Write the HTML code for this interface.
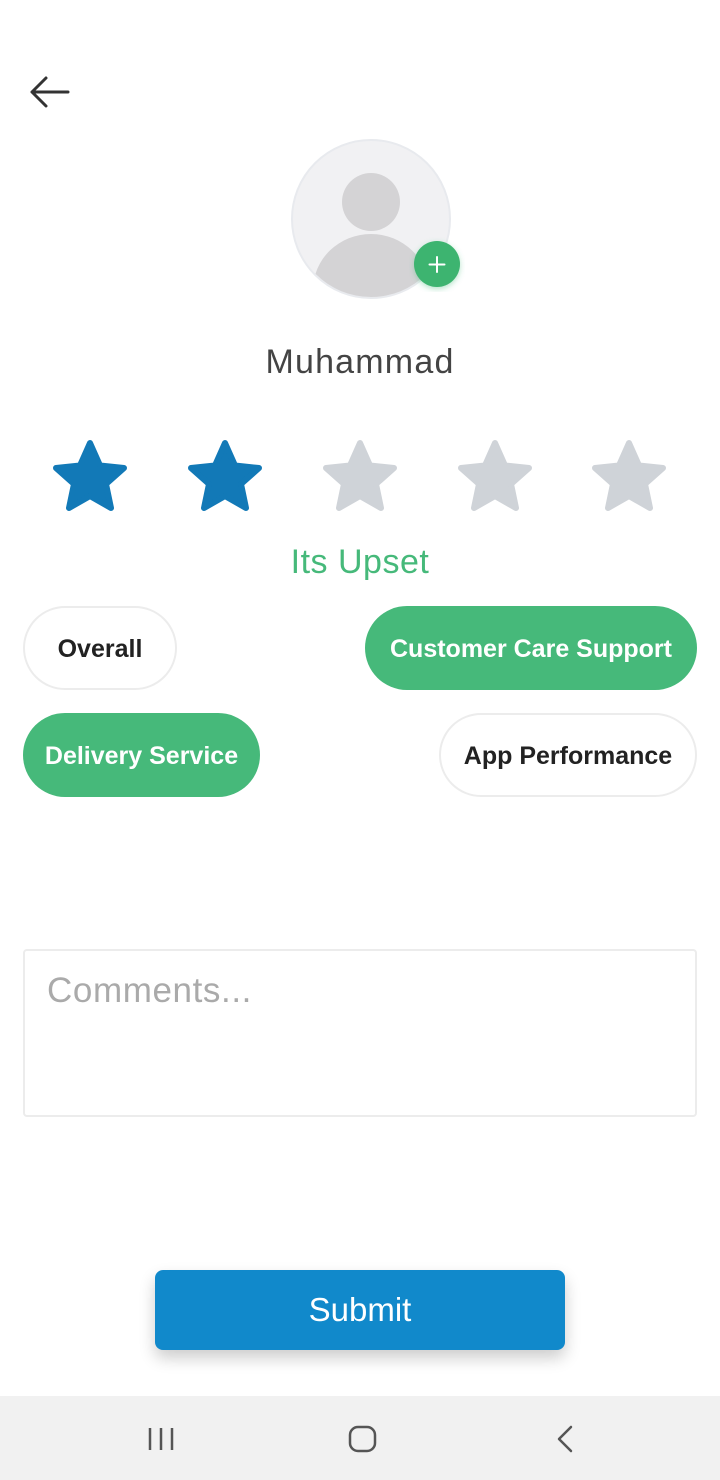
<!DOCTYPE html>
<html><head><meta charset="utf-8"><style>
*{margin:0;padding:0;box-sizing:border-box}
body{width:720px;height:1480px;background:#fff;position:relative;overflow:hidden;font-family:"Liberation Sans",sans-serif}
.abs{position:absolute}
.chip{position:absolute;height:84px;border-radius:42px;font-size:25px;font-weight:bold;display:flex;align-items:center;justify-content:center;padding-top:3px}
.w{border:2px solid #ececec;color:#222;background:#fff}
.g{background:#46b97a;color:#fff}
</style></head><body>
<svg class="abs" style="left:28px;top:74px" width="44" height="36" viewBox="0 0 44 36"><path d="M40 18H4M18 4L4 18l14 14" fill="none" stroke="#333" stroke-width="3" stroke-linecap="round" stroke-linejoin="round"/></svg>
<svg class="abs" style="left:280px;top:130px" width="200" height="180" viewBox="280 130 200 180">
<defs><clipPath id="c"><circle cx="371" cy="219" r="78"/></clipPath><filter id="s"><feDropShadow dx="0" dy="2" stdDeviation="3" flood-color="#46b97a" flood-opacity=".4"/></filter></defs>
<circle cx="371" cy="219" r="79" fill="#f1f1f3" stroke="#e8eaee" stroke-width="2"/>
<g clip-path="url(#c)"><circle cx="371" cy="202" r="29" fill="#d4d3d5"/><ellipse cx="371" cy="290" rx="58" ry="56" fill="#d4d3d5"/></g>
<circle cx="437" cy="264" r="23" fill="#3db46f" filter="url(#s)"/>
<path d="M437 257v15M429.5 264.5h15" stroke="#fff" stroke-width="2" stroke-linecap="round"/>
</svg>
<div class="abs" style="left:0;width:720px;top:343px;text-align:center;font-size:34px;color:#444;letter-spacing:1.2px">Muhammad</div>
<svg class="abs" style="left:0;top:430px" width="720" height="90" viewBox="0 430 720 90">
<defs><path id="st" d="M0,-36 L10,-13.5 L34,-11 L16,5 L21,29 L0,17 L-21,29 L-16,5 L-34,-11 L-10,-13.5Z" stroke-linejoin="round" stroke-width="6"/></defs>
<use href="#st" x="90" y="479" fill="#1279b7" stroke="#1279b7"/>
<use href="#st" x="225" y="479" fill="#1279b7" stroke="#1279b7"/>
<use href="#st" x="360" y="479" fill="#cfd3d8" stroke="#cfd3d8"/>
<use href="#st" x="495" y="479" fill="#cfd3d8" stroke="#cfd3d8"/>
<use href="#st" x="629" y="479" fill="#cfd3d8" stroke="#cfd3d8"/>
</svg>
<div class="abs" style="left:0;width:720px;top:543px;text-align:center;font-size:34px;color:#46b97a;letter-spacing:0.5px">Its Upset</div>
<div class="chip w" style="left:23px;top:606px;width:154px">Overall</div>
<div class="chip g" style="left:365px;top:606px;width:332px">Customer Care Support</div>
<div class="chip g" style="left:23px;top:713px;width:237px">Delivery Service</div>
<div class="chip w" style="left:439px;top:713px;width:258px">App Performance</div>
<div class="abs" style="left:23px;top:949px;width:674px;height:168px;border:2px solid #ececec;border-radius:4px;padding:20px 22px;font-size:35px;color:#aaa;letter-spacing:0.6px">Comments...</div>
<div class="abs" style="left:155px;top:1270px;width:410px;height:80px;background:#1189cb;border-radius:8px;color:#fff;font-size:33px;display:flex;align-items:center;justify-content:center;box-shadow:0 8px 16px rgba(0,0,0,.2)">Submit</div>
<div class="abs" style="left:0;top:1396px;width:720px;height:84px;background:#f1f1f1"></div>
<svg class="abs" style="left:0;top:1396px" width="720" height="84" viewBox="0 0 720 84">
<path d="M150 32v22M161 32v22M172 32v22" stroke="#555" stroke-width="2.5"/>
<rect x="350" y="31" width="25" height="24" rx="8" fill="none" stroke="#555" stroke-width="2.5"/>
<path d="M571 31l-12 12 12 12" fill="none" stroke="#555" stroke-width="2.5" stroke-linecap="round" stroke-linejoin="round"/>
</svg>
</body></html>
